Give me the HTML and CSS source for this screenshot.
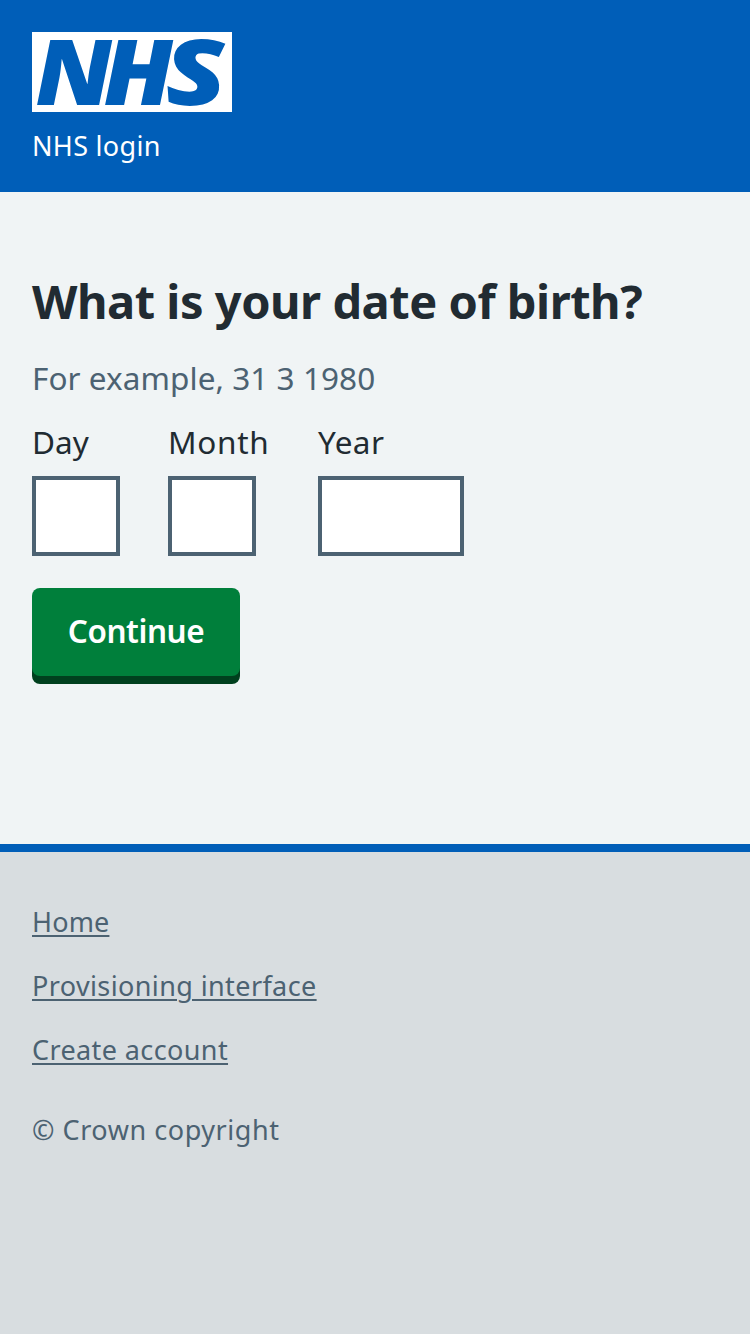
FILE: index.html
```html
<!DOCTYPE html>
<html lang="en">
<head>
  <meta charset="utf-8">
  <title>What is your date of birth? - NHS login</title>
  <link rel="stylesheet" href="styles.css">
</head>
<body>
  <header class="header">
    <svg class="logo" viewBox="0 0 200 80" role="img" aria-label="NHS">
      <rect class="logo-box" width="200" height="80"/>
      <g class="logo-text">
        <text transform="translate(3.5 72.5) skewX(1.5)" textLength="78" lengthAdjust="spacingAndGlyphs">N</text>
        <text transform="translate(71.5 72.5) skewX(1.5)" textLength="71" lengthAdjust="spacingAndGlyphs">H</text>
        <text class="logo-s" transform="translate(134.5 72.5) skewX(4)" textLength="62" lengthAdjust="spacingAndGlyphs">S</text>
      </g>
    </svg>
    <div class="service">NHS login</div>
  </header>
  <main class="main">
    <h1 class="title">What is your date of birth?</h1>
    <p class="hint">For example, 31 3 1980</p>
    <form class="form">
      <div class="date">
        <div class="field"><label class="label label-day" for="day">Day</label><input class="input" id="day" type="text"></div>
        <div class="field"><label class="label label-month" for="month">Month</label><input class="input" id="month" type="text"></div>
        <div class="field"><label class="label label-year" for="year">Year</label><input class="input input-year" id="year" type="text"></div>
      </div>
      <button class="button" type="button">Continue</button>
    </form>
  </main>
  <footer class="footer">
    <ul class="links">
      <li><a class="link link-home" href="#">Home</a></li>
      <li><a class="link" href="#">Provisioning interface</a></li>
      <li><a class="link" href="#">Create account</a></li>
    </ul>
    <p class="copyright">© Crown copyright</p>
  </footer>
</body>
</html>
```
FILE: styles.css
```css
* { box-sizing: border-box; }
body {
  margin: 0;
  min-height: 1334px;
  display: flex;
  flex-direction: column;
  background: #f0f4f5;
  color: #212b32;
  font-family: "Noto Sans", "Open Sans", sans-serif;
}
.header {
  height: 192px;
  padding: 32px;
  background: #005eb8;
  color: #fff;
}
.logo { display: block; width: 200px; height: 80px; overflow: visible; }
.logo-box { fill: #fff; }
.logo-text {
  fill: #005eb8;
  font-family: "Open Sans", "Noto Sans", sans-serif;
  font-size: 91px;
  font-weight: 780;
  font-style: italic;
}
.logo-s { font-weight: 800; }
.service {
  margin-top: 16px;
  font-size: 27px;
  line-height: 36px;
  letter-spacing: 0.3px;
}
.main { height: 652px; padding: 79px 32px 0; }
.title {
  margin: 0 0 23px;
  font-size: 47px;
  line-height: 60px;
  font-weight: 700;
  letter-spacing: -0.48px;
  white-space: nowrap;
}
.hint {
  margin: 0 0 16px;
  color: #4c6272;
  font-size: 31.5px;
  line-height: 48px;
  letter-spacing: 0.06px;
}
.date { display: flex; margin-bottom: 32px; }
.field { display: flex; flex-direction: column; margin-right: 48px; }
.label { margin-bottom: 10px; font-size: 31.5px; line-height: 48px; }
.label-day { width: 88px; }
.label-month { width: 102px; letter-spacing: 0.7px; }
.label-year { letter-spacing: 0.4px; }
.input {
  width: 88px;
  height: 80px;
  border: 4px solid #4c6272;
  border-radius: 0;
  background: #fff;
  padding: 8px;
  font: inherit;
  font-size: 32px;
}
.input-year { width: 146px; }
.button {
  display: block;
  width: 208px;
  height: 88px;
  padding: 0 0 2px;
  border: 0;
  border-radius: 8px;
  background: #007f3b;
  box-shadow: 0 8px 0 #00401e;
  color: #fff;
  font: 600 31.5px/48px "Noto Sans", "Open Sans", sans-serif;
  letter-spacing: -0.45px;
}
.footer {
  flex: 1;
  padding: 46px 32px;
  border-top: 8px solid #005eb8;
  background: #d8dde0;
  color: #4c6272;
  font-size: 27px;
  line-height: 48px;
}
.links {
  display: flex;
  flex-direction: column;
  gap: 16px;
  margin: 0 0 32px;
  padding: 0;
  list-style: none;
}
.link {
  color: inherit;
  letter-spacing: 0.39px;
  text-decoration-thickness: 2px;
  text-underline-offset: 3px;
}
.link-home { letter-spacing: 0.15px; }
.copyright { margin: 0; letter-spacing: 0.55px; }
```
